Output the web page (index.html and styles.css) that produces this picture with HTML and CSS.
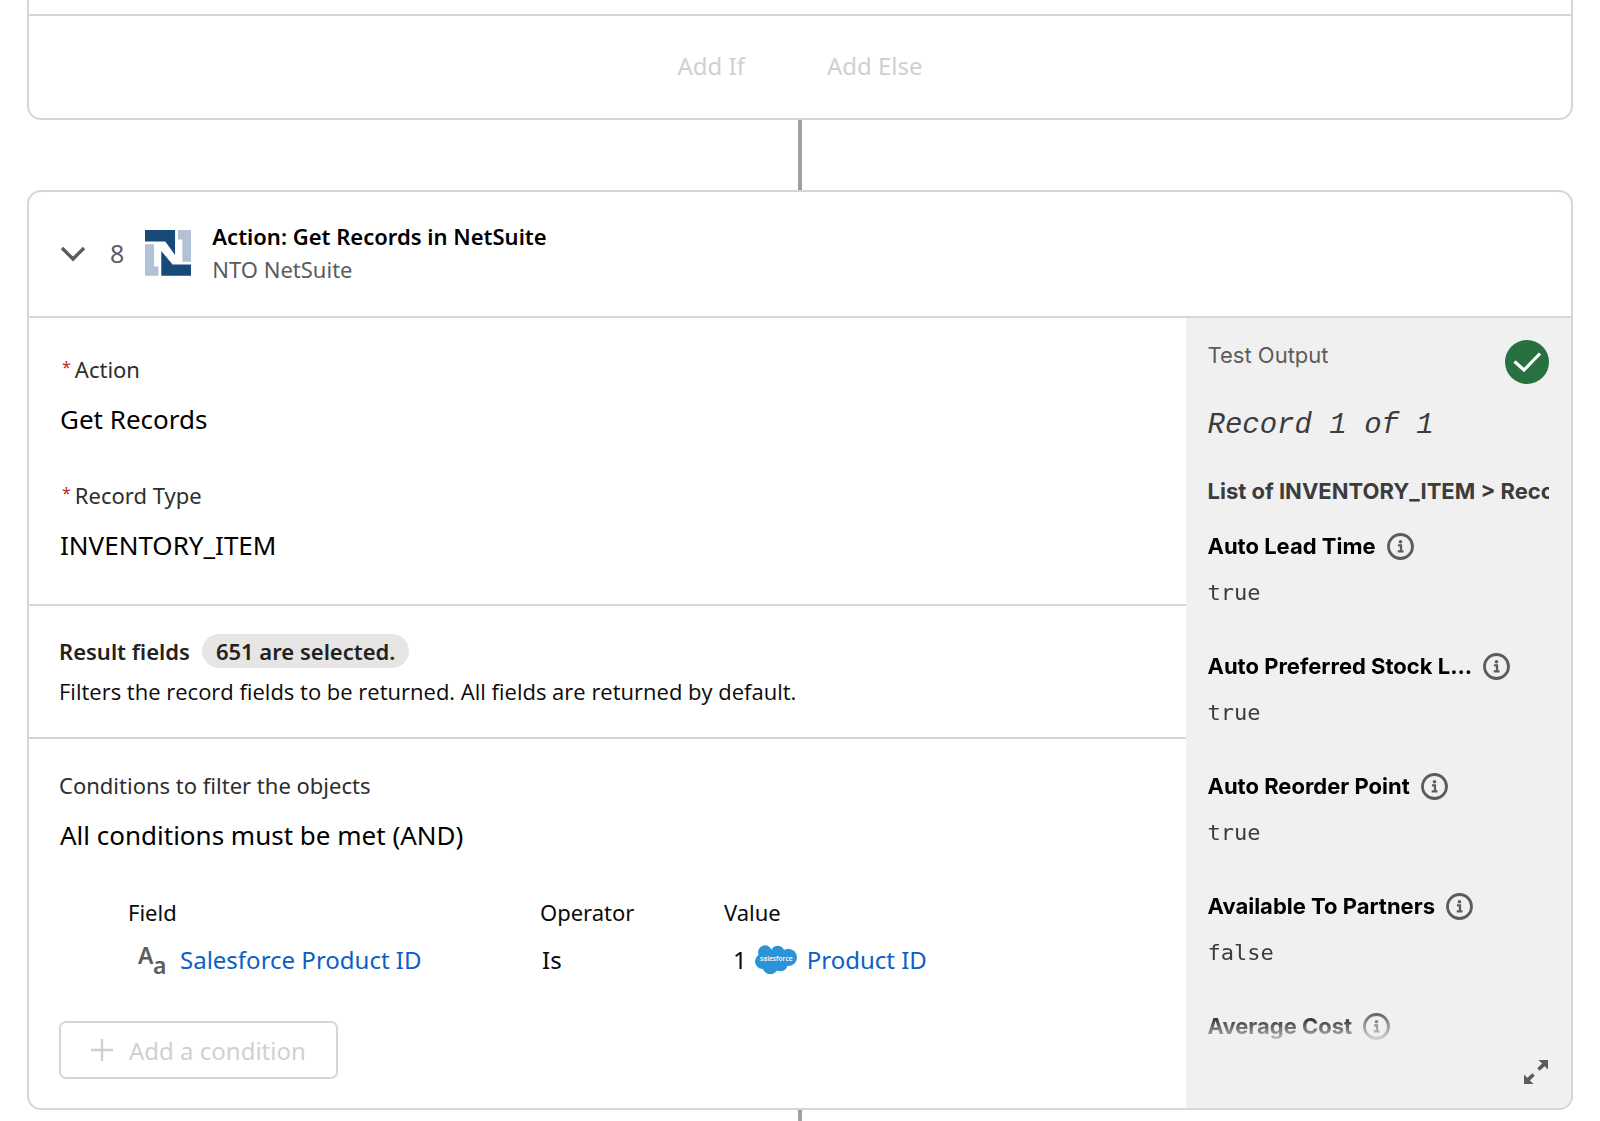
FILE: index.html
```html
<!DOCTYPE html>
<html lang="en">
<head>
    <meta charset="UTF-8">
    <meta name="viewport" content="width=device-width, initial-scale=1.0">
    <title>Flow Builder</title>
    <link rel="stylesheet" href="styles.css">
</head>
<body>
    <svg class="sprite" aria-hidden="true">
        <symbol id="icon-info" viewBox="0 0 27 27">
            <circle cx="13.5" cy="13.5" r="12" fill="none" stroke="#5c5c5c" stroke-width="2.8"/>
            <circle cx="13.5" cy="8.800" r="1.800" fill="#5c5c5c"/>
            <path d="M11 12.300h3v5.500M10.700 18.300h5.800" fill="none" stroke="#5c5c5c" stroke-width="2.200"/>
        </symbol>
    </svg>

    <section class="card card-top">
        <div class="branch-actions">
            <button type="button" class="btn-plain" disabled>Add If</button>
            <button type="button" class="btn-plain" disabled>Add Else</button>
        </div>
    </section>

    <div class="connector"></div>

    <section class="card">
        <header class="card-header">
            <button type="button" class="icon-btn toggle" aria-label="Collapse step">
                <svg width="26" height="18" viewBox="0 0 26 18"><path d="M2 4l11 11L24 4" fill="none" stroke="#5c5c5c" stroke-width="3.4"/></svg>
            </button>
            <span class="step-number">8</span>
            <svg class="app-logo" width="46" height="46" viewBox="0 0 127 136" preserveAspectRatio="none" role="img" aria-label="NetSuite">
                <path fill="#b2c1d5" d="M91 0h36v94h-24V28H91zM0 42h25v66h12v27H0z"/>
                <path fill="#174a79" d="M0 0h83v74L56 34H0zM45 62l31 40h51v33H45z"/>
            </svg>
            <div>
                <h2>Action: Get Records in NetSuite</h2>
                <p class="subtitle">NTO NetSuite</p>
            </div>
        </header>

        <div class="card-body">
            <div class="settings">
                <div class="section fields">
                    <div>
                        <p class="label required"><span class="star">*</span>Action</p>
                        <p class="value">Get Records</p>
                    </div>
                    <div>
                        <p class="label required"><span class="star">*</span>Record Type</p>
                        <p class="value">INVENTORY_ITEM</p>
                    </div>
                </div>

                <div class="section results">
                    <div class="results-title">
                        <h3>Result fields</h3>
                        <span class="pill">651 are selected.</span>
                    </div>
                    <p class="hint">Filters the record fields to be returned. All fields are returned by default.</p>
                </div>

                <div class="section conditions">
                    <p class="label">Conditions to filter the objects</p>
                    <p class="value">All conditions must be met (AND)</p>
                    <table>
                        <thead>
                            <tr>
                                <th class="col-field">Field</th>
                                <th class="col-operator">Operator</th>
                                <th>Value</th>
                            </tr>
                        </thead>
                        <tbody>
                            <tr>
                                <td>
                                    <div class="cell cell-field">
                                        <svg width="28" height="30" viewBox="0 0 28 30" role="img" aria-label="Text field" class="type-icon">
                                            <text x="0" y="19">A</text>
                                            <text x="15" y="29">a</text>
                                        </svg>
                                        <a href="#">Salesforce Product ID</a>
                                    </div>
                                </td>
                                <td><div class="cell operator">Is</div></td>
                                <td>
                                    <div class="cell cell-value">
                                        <span>1</span>
                                        <svg width="42" height="30" viewBox="0 0 126 90" role="img" aria-label="Salesforce">
                                            <g fill="#2a94d6">
                                                <circle cx="30" cy="22" r="21"/>
                                                <circle cx="68" cy="23" r="21"/>
                                                <circle cx="100" cy="37" r="26"/>
                                                <circle cx="23" cy="49" r="23"/>
                                                <circle cx="46" cy="65" r="23"/>
                                                <circle cx="76" cy="57" r="22"/>
                                                <path d="M25 25h75v35H25z"/>
                                            </g>
                                            <text x="64" y="48" class="cloud-text">salesforce</text>
                                        </svg>
                                        <a href="#">Product ID</a>
                                    </div>
                                </td>
                            </tr>
                        </tbody>
                    </table>
                    <button type="button" class="btn-outline" disabled>
                        <svg width="22" height="22" viewBox="0 0 22 22"><path d="M11 0v22M0 11h22" stroke="#d0d0d0" stroke-width="2.4"/></svg>
                        Add a condition
                    </button>
                </div>
            </div>

            <aside class="output">
                <div class="output-header">
                    <p>Test Output</p>
                    <svg width="44" height="44" viewBox="0 0 44 44" role="img" aria-label="Success">
                        <circle cx="22" cy="22" r="22" fill="#26713f"/>
                        <path d="M9.500 21.500l9.500 8.500L35 13.500" fill="none" stroke="#fff" stroke-width="3.200"/>
                    </svg>
                </div>
                <p class="record-count">Record 1 of 1</p>
                <h3 class="path">List of INVENTORY_ITEM &gt; Record</h3>
                <dl>
                    <dt><span>Auto Lead Time</span><button type="button" class="icon-btn" aria-label="Info"><svg width="27" height="27"><use href="#icon-info"/></svg></button></dt>
                    <dd>true</dd>
                    <dt><span>Auto Preferred Stock L...</span><button type="button" class="icon-btn" aria-label="Info"><svg width="27" height="27"><use href="#icon-info"/></svg></button></dt>
                    <dd>true</dd>
                    <dt><span>Auto Reorder Point</span><button type="button" class="icon-btn" aria-label="Info"><svg width="27" height="27"><use href="#icon-info"/></svg></button></dt>
                    <dd>true</dd>
                    <dt><span>Available To Partners</span><button type="button" class="icon-btn" aria-label="Info"><svg width="27" height="27"><use href="#icon-info"/></svg></button></dt>
                    <dd>false</dd>
                    <dt><span>Average Cost</span><button type="button" class="icon-btn" aria-label="Info"><svg width="27" height="27"><use href="#icon-info"/></svg></button></dt>
                </dl>
                <button type="button" class="icon-btn expand" aria-label="Expand output">
                    <svg width="26" height="26" viewBox="0 0 26 26" fill="#5c5c5c">
                        <path d="M15.500 1H25v9.500l-3.300-3.300-5 4.600-2.500-2.500 4.900-4.900z"/>
                        <path d="M10.500 25H1v-9.500l3.300 3.300 5-4.600 2.500 2.500-4.900 4.900z"/>
                    </svg>
                </button>
            </aside>
        </div>
    </section>

    <div class="connector connector-end"></div>
</body>
</html>
```
FILE: styles.css
```css
* {
    box-sizing: border-box;
}

body {
    margin: 0 27px;
    background: #fff;
    color: #0b0b0b;
    font-family: "Noto Sans", sans-serif;
    font-size: 22px;
    line-height: 30px;
}

h2, h3, p, dl, dd {
    margin: 0;
}

h2, h3 {
    font-size: 22px;
    font-weight: 600;
}

a {
    color: #0b5fc7;
    text-decoration: none;
}

button {
    font-family: inherit;
}

.sprite {
    display: none;
}

.icon-btn {
    display: flex;
    padding: 0;
    border: 0;
    background: none;
    cursor: pointer;
}

.card {
    border: 2px solid #d6d6d6;
    border-radius: 14px;
    background: #fff;
    overflow: hidden;
}

.card-top {
    padding-top: 14px;
    border-top: 0;
    border-radius: 0 0 14px 14px;
}

.branch-actions {
    display: flex;
    justify-content: center;
    gap: 82px;
    padding: 33px 0 35px;
    border-top: 2px solid #d6d6d6;
}

.btn-plain {
    padding: 0;
    border: 0;
    background: none;
    color: #d0d0d0;
    font-size: 24px;
    line-height: 34px;
}

.connector {
    width: 4px;
    height: 70px;
    margin: 0 auto;
    background: #a0a0a0;
}

.connector-end {
    height: 11px;
}

.card-header {
    display: flex;
    align-items: center;
    padding: 28px 31px 30px;
    border-bottom: 2px solid #d6d6d6;
}

.card-header h2 {
    color: #000;
    line-height: 33px;
}

.subtitle {
    color: #5c5c5c;
    line-height: 33px;
}

.step-number {
    margin: 0 21px 0 24px;
    color: #5c5c5c;
    font-size: 25px;
}

.app-logo {
    margin-right: 21px;
}

/* step settings */
.card-body {
    display: flex;
}

.settings {
    flex: 1;
    min-width: 0;
}

.section {
    padding: 31px 30px;
}

.section + .section {
    border-top: 2px solid #d6d6d6;
}

.label {
    color: #2e2e2e;
}

.value {
    margin-top: 18px;
    padding-left: 1px;
    color: #000;
    font-size: 26px;
    line-height: 34px;
}

.fields {
    display: grid;
    gap: 44px;
    padding-top: 36px;
    padding-bottom: 42px;
}

.required {
    display: flex;
    gap: 4px;
    padding-left: 3px;
}

.star {
    color: #ba2a20;
    font-size: 16px;
    line-height: 26px;
}

.results {
    padding-top: 28px;
}

.results-title {
    display: flex;
    align-items: center;
    gap: 12px;
    margin-bottom: 8px;
    color: #222;
}

.pill {
    padding: 0 14px;
    border-radius: 17px;
    background: #e7e6e5;
    font-weight: 600;
    line-height: 34px;
}

.hint {
    font-family: "Open Sans", sans-serif;
}

.conditions {
    padding-bottom: 29px;
}

table {
    width: 100%;
    margin: 45px 0 44px;
    padding-left: 69px;
    border-spacing: 0;
}

th, td {
    padding: 0;
    text-align: left;
}

th {
    padding-bottom: 16px;
    font-weight: 400;
}

.col-field {
    width: 412px;
}

.col-operator {
    width: 184px;
}

.cell {
    display: flex;
    align-items: center;
    height: 34px;
    font-size: 24px;
}

.cell-field {
    gap: 14px;
    padding-left: 10px;
}

.cell-value {
    gap: 8px;
    padding-left: 9px;
}

.cell-value a {
    margin-left: 2px;
}

.operator {
    padding-left: 2px;
}

.type-icon {
    overflow: visible;
    fill: #5c5c5c;
    font-size: 23px;
    font-weight: 600;
}

.cloud-text {
    fill: #fff;
    font-family: "Open Sans", sans-serif;
    font-size: 20px;
    font-weight: 600;
    text-anchor: middle;
}

.btn-outline {
    display: flex;
    align-items: center;
    gap: 16px;
    height: 58px;
    padding: 0 30px;
    border: 2px solid #d6d6d6;
    border-radius: 7px;
    background: #fff;
    color: #d0d0d0;
    font-size: 24px;
}

/* test output panel */
.output {
    width: 25%;
    padding: 22px;
    background: #f0f0f0;
    color: #3c3c3c;
    font-family: Inter, sans-serif;
}

.output-header {
    display: flex;
    justify-content: space-between;
    color: #5c5c5c;
}

.record-count {
    margin: 24px 0 32px;
    font-family: "Liberation Mono", monospace;
    font-size: 29px;
    font-style: italic;
    line-height: 36px;
}

.path {
    margin-bottom: 25px;
    overflow: hidden;
    font-weight: 700;
    white-space: nowrap;
}

dl {
    padding-bottom: 6px;
    -webkit-mask-image: linear-gradient(#000 calc(100% - 36px), transparent);
    mask-image: linear-gradient(#000 calc(100% - 36px), transparent);
}

dt {
    display: flex;
    align-items: center;
    gap: 11px;
    color: #000;
    font-weight: 700;
    white-space: nowrap;
}

dd {
    margin: 17px 0 43px;
    font-family: "DejaVu Sans Mono", monospace;
    font-size: 22px;
}

.expand {
    margin: 12px 0 0 auto;
}
```
